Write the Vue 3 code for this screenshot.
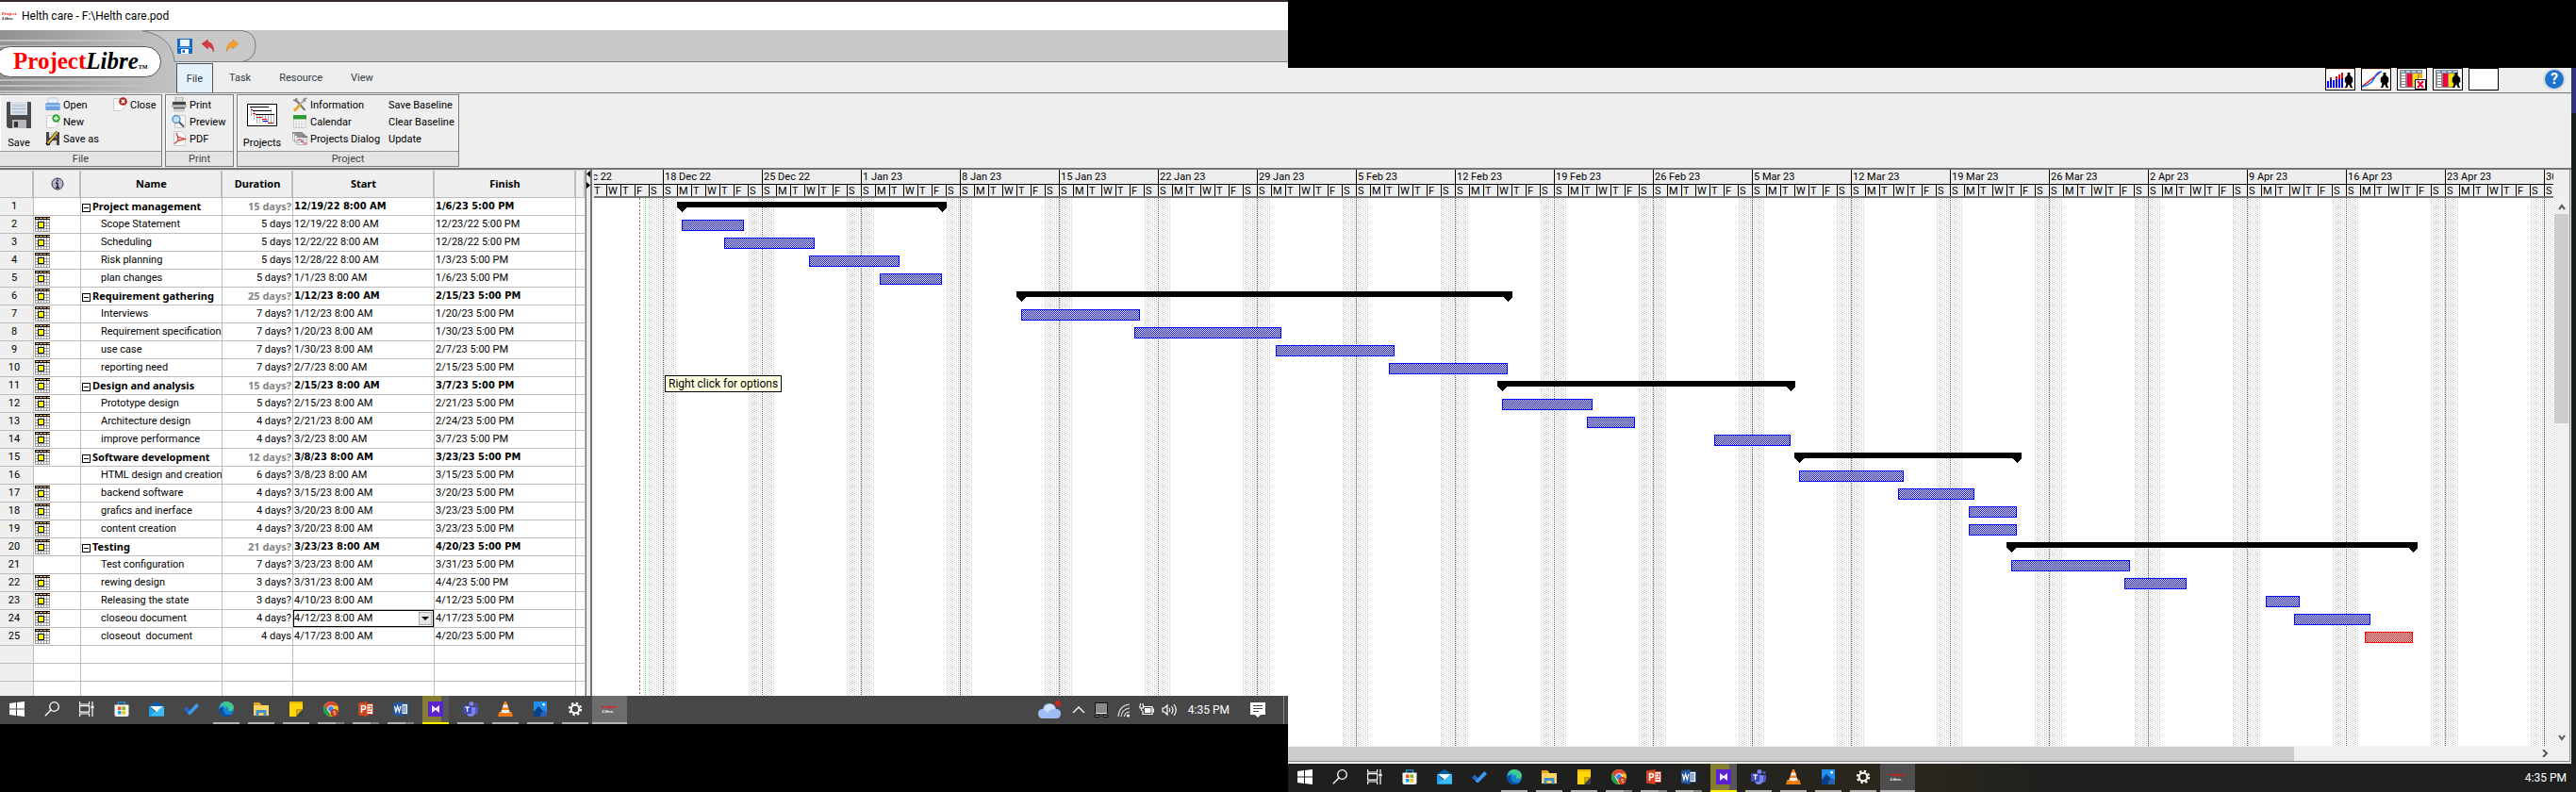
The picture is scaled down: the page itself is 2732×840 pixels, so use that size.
<script setup>
const DAY = 15
const ROW = 19
const ORIGIN = Date.UTC(2022, 11, 18)
const ORIGIN_X = 75

const tasks = [
  ['Project management', '15 days?', '12/19/22', '1/6/23', 'group', false],
  ['Scope Statement', '5 days', '12/19/22', '12/23/22', '', true],
  ['Scheduling', '5 days', '12/22/22', '12/28/22', '', true],
  ['Risk planning', '5 days', '12/28/22', '1/3/23', '', true],
  ['plan changes', '5 days?', '1/1/23', '1/6/23', '', true],
  ['Requirement gathering', '25 days?', '1/12/23', '2/15/23', 'group', true],
  ['Interviews', '7 days?', '1/12/23', '1/20/23', '', true],
  ['Requirement specification', '7 days?', '1/20/23', '1/30/23', '', true],
  ['use case', '7 days?', '1/30/23', '2/7/23', '', true],
  ['reporting need', '7 days?', '2/7/23', '2/15/23', '', true],
  ['Design and analysis', '15 days?', '2/15/23', '3/7/23', 'group', true],
  ['Prototype design', '5 days?', '2/15/23', '2/21/23', '', true],
  ['Architecture design', '4 days?', '2/21/23', '2/24/23', '', true],
  ['improve performance', '4 days?', '3/2/23', '3/7/23', '', true],
  ['Software development', '12 days?', '3/8/23', '3/23/23', 'group', true],
  ['HTML design and creation', '6 days?', '3/8/23', '3/15/23', '', false],
  ['backend software', '4 days?', '3/15/23', '3/20/23', '', true],
  ['grafics and inerface', '4 days?', '3/20/23', '3/23/23', '', true],
  ['content creation', '4 days?', '3/20/23', '3/23/23', '', true],
  ['Testing', '21 days?', '3/23/23', '4/20/23', 'group', true],
  ['Test configuration', '7 days?', '3/23/23', '3/31/23', '', false],
  ['rewing design', '3 days?', '3/31/23', '4/4/23', '', true],
  ['Releasing the state', '3 days?', '4/10/23', '4/12/23', '', true],
  ['closeou document', '4 days?', '4/12/23', '4/17/23', '', true],
  ['closeout  document', '4 days', '4/17/23', '4/20/23', 'critical', true],
].map(([name, duration, start, finish, kind, flag]) => ({ name, duration, start, finish, kind, flag }))

const editingRow = 23

function toDate(text) {
  const [m, d, y] = text.split('/').map(Number)
  let t = Date.UTC(2000 + y, m - 1, d)
  if (new Date(t).getUTCDay() === 0) t += 86400000
  return t
}
const dayX = (t) => ORIGIN_X + Math.round((t - ORIGIN) / 86400000) * DAY

const bars = tasks.map((t, i) => {
  const x = dayX(toDate(t.start)) + 5
  const end = dayX(toDate(t.finish)) + 11
  return { kind: t.kind, x, end, y: i * ROW }
})

const months = ['Jan', 'Feb', 'Mar', 'Apr', 'May', 'Jun', 'Jul', 'Aug', 'Sep', 'Oct', 'Nov', 'Dec']
const weeks = Array.from({ length: 21 }, (_, i) => {
  const t = ORIGIN + (i - 1) * 7 * 86400000
  const d = new Date(t)
  return {
    label: `${d.getUTCDate()} ${months[d.getUTCMonth()]} ${String(d.getUTCFullYear()).slice(2)}`,
    x: dayX(t),
  }
})
const dayLetters = ['S', 'M', 'T', 'W', 'T', 'F', 'S']

const apps = [
  { id: 'win', title: 'Start' },
  { id: 'search', title: 'Search' },
  { id: 'taskview', title: 'Task view' },
  { id: 'store', title: 'Store' },
  { id: 'mail', title: 'Mail' },
  { id: 'todo', title: 'To Do' },
  { id: 'edge', title: 'Edge', open: 'one' },
  { id: 'folder', title: 'File Explorer', open: 'one' },
  { id: 'notes', title: 'Sticky Notes', open: 'one' },
  { id: 'chrome', title: 'Chrome', open: 'two' },
  { id: 'ppt', title: 'PowerPoint', open: 'two' },
  { id: 'word', title: 'Word', open: 'two' },
  { id: 'vs', title: 'Media', open: 'alert' },
  { id: 'teams', title: 'Teams', open: 'one' },
  { id: 'vlc', title: 'VLC', open: 'one' },
  { id: 'photos', title: 'Photos', open: 'one' },
  { id: 'gear', title: 'Settings', open: 'one' },
]
const fileItems = [
  { id: 'open', label: 'Open' },
  { id: 'close', label: 'Close' },
  { id: 'new', label: 'New' },
  { id: 'saveas', label: 'Save as' },
]
const printItems = [
  { id: 'print', label: 'Print' },
  { id: 'preview', label: 'Preview' },
  { id: 'pdf', label: 'PDF' },
]
const projectItems = [
  { id: 'tools', label: 'Information' },
  { id: 'calendar', label: 'Calendar' },
  { id: 'projects', label: 'Projects Dialog' },
]
const baselineItems = ['Save Baseline', 'Clear Baseline', 'Update']
const views = ['histogram', 'curve', 'nosheet', 'sheet', 'blank']
</script>

<template>
  <div class="desktop">
    <svg class="sprite" aria-hidden="true">
      <symbol id="i-win" viewBox="0 0 16 16"><path fill="#fff" d="M0 2l7-1v6.500H0zM8 .9L16 0v7.500H8zM0 8.500h7V15l-7-1zM8 8.500h8V16l-8-1z" /></symbol>
      <symbol id="i-search" viewBox="0 0 16 16"><g fill="none" stroke="#fff" stroke-width="1.300"><circle cx="10.500" cy="5.500" r="4.800" /><path d="M7 9L.8 15.300" /></g></symbol>
      <symbol id="i-taskview" viewBox="0 0 16 16"><g fill="none" stroke="#fff" stroke-width="1.200"><path d="M.6 0v3h10V0M.6 16v-3h10v3M.6 4.600h10v6.500H.6zM14 0v4M14 8v8" /></g><path fill="#fff" d="M12.500 4.500h3v3h-3z" /></symbol>
      <symbol id="i-store" viewBox="0 0 16 16"><path fill="none" stroke="#1b9de2" stroke-width="1.300" d="M4.500 4V.8h7V4" /><path fill="#f5f5f5" d="M.5 3.500h15V14q0 2-2 2h-11q-2 0-2-2z" /><path fill="#f25022" d="M4 5.500h3.500V9H4z" /><path fill="#7fba00" d="M8.500 5.500H12V9H8.500z" /><path fill="#00a4ef" d="M4 10h3.500v3.500H4z" /><path fill="#ffb900" d="M8.500 10H12v3.500H8.500z" /></symbol>
      <symbol id="i-mail" viewBox="0 0 16 16"><path fill="#0a5ea8" d="M0 5l8-5 8 5v3H0z" /><path fill="#1ca0ea" d="M0 5l8 7 8-7v10.500H0z" /><path fill="#3bbcf5" d="M0 15.500L16 5v10.500z" /><path fill="#eef6fb" d="M1 5h14l-7 6z" /></symbol>
      <symbol id="i-todo" viewBox="0 0 16 16"><path fill="#2564cf" d="M0 8.500L2.800 5.600l5.500 5.500-2.900 2.900z" /><path fill="#3f9bea" d="M5.400 14L3.900 12.300 13.200 2 16 4.800 6.900 14z" /></symbol>
      <symbol id="i-edge" viewBox="0 0 16 16"><circle cx="8" cy="8" r="8" fill="#1482d0" /><path fill="#43c98b" d="M1 5Q4-1 10 .3q6 1.500 6 7-1 3.500-6 3Q11 8 9 6 5 3 1 5z" /><path fill="#0c4fa0" d="M0 8q2-5 7-3-4 2-2 6 2.500 4.500 8.500 2.800Q9 18 4 15 0 12 0 8z" /><path fill="#2fb0e4" d="M0 8Q1 3 6 4.500 9 6 8 8.500 7 5 3 6 .5 7 0 8z" /></symbol>
      <symbol id="i-folder" viewBox="0 0 16 16"><path fill="#e8a317" d="M0 1h6l2 2v4H0z" /><path fill="#ffd45e" d="M0 4h16v11H0z" /><path fill="#3a93dc" d="M2.500 9h11v6.500h-3V12h-5v3.500h-3z" /></symbol>
      <symbol id="i-notes" viewBox="0 0 16 16"><path fill="#ffd60a" d="M1 0h14v16H1z" /><path fill="#e5b400" d="M1 0h14v2H1z" /><path fill="#3f3f3f" d="M8.500 8.500H15V16H8.500z" /><path fill="#d9a800" d="M8.500 8.500H15L8.500 15z" /></symbol>
      <symbol id="i-chrome" viewBox="0 0 16 16"><circle cx="8" cy="8" r="8" fill="#f5c518" /><path fill="#db4437" d="M1 4Q4 0 8 0q5 0 7.400 4.500H8L5 9z" /><path fill="#1e9e55" d="M1 4l4.500 7L8 16Q0 15.500 0 8 0 6 1 4z" /><circle cx="8" cy="8" r="3.700" fill="#fff" /><circle cx="8" cy="8" r="2.900" fill="#4285f4" /><circle cx="11.500" cy="12" r="4" fill="#c23b22" /><path fill="none" stroke="#e9b3a0" d="M12.700 10.500h-2V12h2v1.800h-2" /></symbol>
      <symbol id="i-ppt" viewBox="0 0 16 16"><path fill="#fff" stroke="#d04423" d="M8 2.500h7.500v11H8z" /><path fill="none" stroke="#d04423" stroke-width="1.200" d="M10 5h3.500v3H10M10 10.500h4" /><path fill="#d04423" d="M0 1.500L9.500 0v16L0 14.500z" /><path fill="none" stroke="#fff" stroke-width="1.500" d="M3.500 12V4.500h2q2 0 2 2t-2 2h-2" /></symbol>
      <symbol id="i-word" viewBox="0 0 16 16"><path fill="#fff" stroke="#2b5aa6" d="M8 2.500h7.500v11H8z" /><path stroke="#2b5aa6" d="M10 5h4M10 7h4M10 9h4M10 11h4" /><path fill="#2456a4" d="M0 1.500L9.500 0v16L0 14.500z" /><path fill="none" stroke="#fff" stroke-width="1.200" d="M1.500 5l1.400 6L4.700 5l1.600 6L8 5" /></symbol>
      <symbol id="i-vs" viewBox="0 0 16 16"><path fill="#5c22d0" d="M0 0h16v16H0z" /><path fill="#f3e8ff" d="M4 4l4 3 4-3v8L8 9l-4 3z" /></symbol>
      <symbol id="i-teams" viewBox="0 0 16 16"><circle cx="9" cy="2.500" r="2.500" fill="#7b83eb" /><circle cx="14" cy="3.500" r="1.600" fill="#5059c9" /><path fill="#5059c9" d="M11 6h5v5q0 3-4 3z" /><path fill="#7b83eb" d="M5 6h8v6q-1 4-5 4t-4-5z" /><path fill="#4048b8" d="M0 4h9v9H0z" /><path stroke="#fff" stroke-width="1.300" fill="none" d="M2.300 6.200h4.600M4.600 6v5" /></symbol>
      <symbol id="i-vlc" viewBox="0 0 16 16"><path fill="#f07b13" d="M1.500 11h13l1.500 5H0z" /><path fill="#f58220" d="M7 0h2l4 12q-5 2.500-10 0z" /><path fill="#eee" d="M5.900 3.500h4.200L11 6.500H5zM4.200 9h7.600l.8 2.500q-4.600 1.500-9.200 0z" /></symbol>
      <symbol id="i-photos" viewBox="0 0 16 16"><path fill="#1f8ff0" d="M1 0h14v16H1z" /><path fill="#0c3f86" d="M1 11l5-6 9 9v2H1z" /><path fill="#2a62b0" d="M8 13l4-4 3 3v4H8z" /><path fill="#fff" d="M10 2.500h3V4h-3zM11 1.700h1.200v3H11z" /></symbol>
      <symbol id="i-gear" viewBox="0 0 16 16"><circle cx="8" cy="8" r="4.300" fill="none" stroke="#fff" stroke-width="2" /><circle cx="8" cy="8" r="6.200" fill="none" stroke="#fff" stroke-width="2" stroke-dasharray="2.400 2.470" /></symbol>
      <symbol id="i-open" viewBox="0 0 16 16"><path fill="#e8f0fa" stroke="#9ab" stroke-width=".5" d="M3 1h10v8H3z" /><path fill="#6fa3df" d="M0 7l2-1h12l2 1-.6 7H.6z" /><path fill="#9cc3f0" d="M0 8h16l-.3 2H.3z" /></symbol>
      <symbol id="i-new" viewBox="0 0 16 16"><path fill="#fafafa" stroke="#ccc" d="M1.500 1.500h12v9l-4 4h-8z" /><circle cx="11.500" cy="4.500" r="4.200" fill="#2eab2e" /><path stroke="#fff" stroke-width="1.500" d="M11.500 2v5M9 4.500h5" /></symbol>
      <symbol id="i-close" viewBox="0 0 16 16"><path fill="#fafafa" stroke="#ccc" d="M1.500 1.500h12v9l-4 4h-8z" /><circle cx="11.500" cy="4.500" r="4.300" fill="#b0281c" /><path stroke="#fff" stroke-width="1.500" d="M9.800 2.800l3.400 3.400M13.200 2.800L9.800 6.200" /></symbol>
      <symbol id="i-saveas" viewBox="0 0 16 16"><path fill="#444" d="M1 1h14v14H1z" /><path fill="#ddd" d="M4 1h8v6H4zM5 10h7v5H5z" /><path stroke="#222" stroke-width="3.500" d="M1.500 14.500L13 1" /><path stroke="#e6b33a" stroke-width="2" d="M2.500 13L13 1" /></symbol>
      <symbol id="i-print" viewBox="0 0 16 16"><path fill="#ddd" stroke="#888" stroke-width=".6" d="M4 0h8v5H4z" /><path fill="#444" d="M1 5h14v3H1z" /><path fill="#b5b5b5" d="M0 8h16v3H0z" /><path fill="#555" d="M2 11h12v1.500H2z" /><path fill="#ddd" stroke="#999" stroke-width=".6" d="M3 12.500h10V15H3z" /></symbol>
      <symbol id="i-preview" viewBox="0 0 16 16"><path fill="#f4f4f4" stroke="#ccc" d="M3.500 1.500h11v13h-11z" /><circle cx="5" cy="5.500" r="4" fill="#bfe0f7" stroke="#5c93c4" stroke-width="1.400" /><path stroke="#555" stroke-width="2" d="M8 8.500l5 5" /></symbol>
      <symbol id="i-pdf" viewBox="0 0 16 16"><path fill="#f6f6f6" stroke="#ccc" d="M2.500 .5h8l4 4v11h-12z" /><path fill="none" stroke="#d83a3a" stroke-width="1.300" d="M5 2l1.500 4L14 8.500 7 10l-4 3.500M6.500 6L7 10" /></symbol>
      <symbol id="i-tools" viewBox="0 0 16 16"><path stroke="#777" stroke-width="2" d="M3 2l10.500 12" /><path stroke="#aaa" stroke-width="2" d="M13.500 2L8 8" /><path stroke="#e0a81e" stroke-width="3" d="M8.500 8L2 14.500" /><path stroke="#888" stroke-width="1.500" fill="none" d="M1 3l3 1.500L5 1M15.500 1L12 2.500l2 2.500" /></symbol>
      <symbol id="i-calendar" viewBox="0 0 16 16"><path fill="#f8f8f8" stroke="#ccc" d="M1.500 3h13v11.500h-13z" /><path fill="#2c9c32" d="M1 1h14v4.500H1z" /><path stroke="#bbb" stroke-dasharray="2 1" d="M3 8h10M3 10.500h10M3 13h10" /></symbol>
      <symbol id="i-projects" viewBox="0 0 16 16"><path fill="#fff" stroke="#999" stroke-width=".7" d="M.5 2h11v8H.5zM2.500 4h11v8h-11zM5 6h10.500v8.500H5z" /><path stroke="#444" d="M0 2h11M2.500 4h11M5 6h11" /><path stroke="#ccc" stroke-width=".7" d="M8 7v7M11 7v7M13.500 7v7" /><path stroke="#e33" d="M6 9h4M11.500 13h4" /><path stroke="#33c" d="M9 11h3" /></symbol>
      <symbol id="i-gantts" viewBox="0 0 32 24"><path fill="#fff" stroke="#000" d="M.5 .5h31v23H.5z" /><path fill="none" stroke="#bbb" d="M4.500 4v9M7.500 8v9M10.500 12v9M13.500 12v9M16.500 12v9M19.500 12v9M22.500 12v9M25.500 12v9M28.500 12v9M25.500 5v6" /><path stroke="#000" d="M3 3.500h20M6 7.500h20M9 11.500h20" /><path stroke="#e00" d="M10 14.500h6M16 16.500h5M22 20.500h6M6 10.500h3M4 6.500h2" /><path stroke="#00d" d="M17 18.500h5" /></symbol>
      <symbol id="i-floppy" viewBox="0 0 28 30"><path fill="#4a4a4c" d="M1 2q0-1 1-1h24q1 0 1 1v27H3l-2-2z" /><path fill="#d6e0ea" d="M5 1h18v14H5z" /><path stroke="#a5b4c4" d="M7 5h14M7 8.500h14M7 12h14" /><path fill="#b5b7ba" d="M7 20h15v9H7z" /><path fill="#333" d="M9 22h4v6H9z" /></symbol>
      <symbol id="i-savesmall" viewBox="0 0 16 16"><path fill="#1769c8" d="M0 0h16v16H0z" /><path fill="#e9f4ff" d="M3 1h10v7H3z" /><path fill="#5fb2f3" d="M1 9h14v1H1z" /><path fill="#fff" d="M4 11h8v5H4z" /><path fill="#1769c8" d="M5.500 12H8v3H5.500z" /></symbol>
      <symbol id="i-undo" viewBox="0 0 16 16"><path fill="#d93a3f" stroke="#b4232a" stroke-width=".5" d="M1 5.500L7.500 1v2.600q6.500.6 6 10.400-1.500-5-6-5.400V11z" /></symbol>
      <symbol id="i-redo" viewBox="0 0 16 16"><path fill="#f4a02a" stroke="#cf7d12" stroke-width=".5" d="M15 5.500L8.500 1v2.600Q2 4.200 2.500 14q1.500-5 6-5.400V11z" /></symbol>
      <symbol id="i-constraint" viewBox="0 0 16 16"><path fill="#fff" d="M0 3h16v13H0z" /><path fill="none" stroke="#9a9a9a" d="M.5 3v13M3.500 3v13M6.500 3v13M9.500 3v13M12.500 3v13M15.500 3v13M0 6.500h16M0 9.500h16M0 12.500h16M0 15.500h16" /><path stroke="#000" d="M0 .5h16M0 2.500h16" /><path stroke="#000" d="M0 1.500h16" /><path stroke="#ffc064" stroke-dasharray="3 1" d="M1 1.500h15" /><path fill="#ff0" stroke="#000" d="M3.500 5.500h6v6h-6z" /></symbol>
      <symbol id="i-person" viewBox="0 0 10 18"><path d="M3.500 0h3v3L9.500 6v5H8v3l1.500 3H7L5 13l-2 4H.5L2 14v-3H.5V6l3-3z" /></symbol>
    </svg>

    <section class="window">
      <div class="wallpaper"></div>
      <header class="titlebar">
        <span class="mini"><b>Project</b><i>Libre.</i></span>
        <h1>Helth care - F:\Helth care.pod</h1>
      </header>

      <div class="ribbon-top">
        <div class="brand">
          <svg class="brandbg" viewBox="0 0 275 67" aria-hidden="true">
            <defs>
              <linearGradient id="shade" x1="0" x2="1" y1="0" y2="0"><stop offset="0" stop-color="#929292" /><stop offset="1" stop-color="#c4c4c4" /></linearGradient>
            </defs>
            <path fill="url(#shade)" d="M0 0h151q32 6 33 33h3v34H0z" />
            <path stroke="#bfbfbf" stroke-width="2" d="M0 11h170M0 17h177M0 53h186M0 59h186M0 65h186" />
            <path fill="none" stroke="#7e7e7e" d="M151 .5q32 6 34 33h72q14-3 14-17t-14-16H151" />
          </svg>
          <div class="logo"><b>Project</b><i>Libre</i><small>TM</small></div>
          <div class="quick">
            <button aria-label="Save"><svg><use href="#i-savesmall" /></svg></button>
            <button aria-label="Undo"><svg><use href="#i-undo" /></svg></button>
            <button aria-label="Redo"><svg><use href="#i-redo" /></svg></button>
          </div>
        </div>
        <nav class="tabs">
          <button class="active">File</button>
          <button>Task</button>
          <button>Resource</button>
          <button>View</button>
        </nav>
        <div class="views">
          <button v-for="v in views" :key="v" :aria-label="v">
            <svg v-if="v !== 'blank'" viewBox="1 1 30 22">
              <path v-if="v === 'histogram' || v === 'curve'" fill="#ffd9b8" d="M1 1h30v1H1zM1 21h30v1H1z" />
              <template v-if="v === 'histogram'">
                <path stroke="#00f" stroke-width="2" d="M3 21v-7M6 21V10M9 21v-8M12 21v-9M15 21v-10M18 21V11" />
                <path stroke="#f00" stroke-width="2" d="M6 12v-2M12 12V9M15 12V7M18 11V5" />
              </template>
              <template v-if="v === 'curve'">
                <path fill="none" stroke="#e00" stroke-width="1.500" d="M1 20L20 5" /><path fill="none" stroke="#06f" stroke-width="1.500" d="M1 20q10-2 13-9t8-7" />
              </template>
              <template v-if="v === 'sheet' || v === 'nosheet'">
                <path fill="#888" d="M3 2h24v19H3z" /><path fill="#fff" d="M5 6h4v14H5z" /><path fill="#f5003d" d="M11 6h5v14h-5z" /><path fill="#fd0" d="M17 6h5v14h-5z" /><path fill="#fa0" d="M23 6h4v5h-4z" /><path fill="#fff" d="M23 11h4v10h-4z" />
                <path stroke="#888" d="M4 8.500h6M4 11.500h6M4 14.500h6M4 17.500h6" /><path stroke="#a9c8ee" stroke-dasharray="4 2" stroke-width="2" d="M4 4h23" />
              </template>
              <template v-if="v === 'nosheet'"><path fill="#fff" stroke="#000" d="M19.500 12.500h11v10h-11z" /><path stroke="#e03" stroke-width="2" d="M22 14l6 7M28 14l-6 7" /></template>
              <use v-if="v !== 'nosheet'" href="#i-person" x="20" y="5" width="10" height="17" />
            </svg>
          </button>
          <button class="help" aria-label="Help">?</button>
        </div>
      </div>

      <div class="ribbon">
        <section class="group">
          <div class="tools">
            <button class="big"><svg><use href="#i-floppy" /></svg>Save</button>
            <div class="filegrid">
              <button v-for="f in fileItems" :key="f.id"><svg><use :href="'#i-' + f.id" /></svg>{{ f.label }}</button>
            </div>
          </div>
          <h2>File</h2>
        </section>
        <section class="group print">
          <div class="tools">
            <div class="stack">
              <button v-for="f in printItems" :key="f.id"><svg><use :href="'#i-' + f.id" /></svg>{{ f.label }}</button>
            </div>
          </div>
          <h2>Print</h2>
        </section>
        <section class="group project">
          <div class="tools">
            <button class="big wide"><svg><use href="#i-gantts" /></svg>Projects</button>
            <div class="stack list">
              <button v-for="f in projectItems" :key="f.id"><svg><use :href="'#i-' + f.id" /></svg>{{ f.label }}</button>
            </div>
            <div class="stack">
              <button v-for="b in baselineItems" :key="b">{{ b }}</button>
            </div>
          </div>
          <h2>Project</h2>
        </section>
      </div>

      <main class="work">
        <div class="sheet">
          <table>
            <colgroup><col class="c0" /><col class="c1" /><col class="c2" /><col class="c3" /><col class="c4" /><col class="c4" /><col class="c6" /></colgroup>
            <thead>
              <tr>
                <th></th>
                <th><svg class="info" viewBox="0 0 14 14"><circle cx="7" cy="7" r="6" fill="#b4b4cc" stroke="#333" /><path stroke="#223" stroke-width="1.500" d="M7 6v5M5 6h2M5 11h4M7 2.500v2" /></svg></th>
                <th>Name</th><th>Duration</th><th>Start</th><th>Finish</th><th></th>
              </tr>
            </thead>
            <tbody>
              <tr v-for="(t, i) in tasks" :key="i" :class="{ summary: t.kind === 'group' }">
                <th>{{ i + 1 }}</th>
                <td class="flag"><svg v-if="t.flag"><use href="#i-constraint" /></svg></td>
                <td class="name"><button v-if="t.kind === 'group'" class="fold" aria-label="Collapse"></button>{{ t.name }}</td>
                <td class="dur">{{ t.duration }}</td>
                <td v-if="i !== editingRow" class="date">{{ t.start }} 8:00 AM</td>
                <td v-else class="edit">
                  <div><input aria-label="Start" :value="t.start + ' 8:00 AM'" /><button aria-label="Choose date"></button></div>
                </td>
                <td class="date">{{ t.finish }} 5:00 PM</td>
                <td></td>
              </tr>
              <tr v-for="n in 4" :key="'e' + n"><th></th><td></td><td></td><td></td><td></td><td></td><td></td></tr>
            </tbody>
          </table>
        </div>
        <div class="splitter">
          <svg viewBox="0 0 4 20"><path d="M4 0v7L0 3.500zM0 12v7l4-3.500z" /></svg>
        </div>
        <div class="chart">
          <div class="scale">
            <div v-for="w in weeks" :key="w.x" class="week">
              <div class="label">{{ w.label }}</div>
              <div class="days"><span v-for="(d, i) in dayLetters" :key="i">{{ d }}</span></div>
            </div>
          </div>
          <div class="canvas">
            <svg class="gantt" shape-rendering="crispEdges">
              <defs>
                <pattern id="weekend" width="4" height="2" patternUnits="userSpaceOnUse"><path fill="#c9c9c9" d="M0 0h1v1H0zM2 1h1v1H2z" /></pattern>
                <pattern id="work" width="2" height="2" patternUnits="userSpaceOnUse"><path fill="#fff" d="M0 0h2v2H0z" /><path fill="#00f" d="M0 0h1v1H0zM1 1h1v1H1z" /></pattern>
                <pattern id="critical" width="2" height="2" patternUnits="userSpaceOnUse"><path fill="#fff" d="M0 0h2v2H0z" /><path fill="#f00" d="M0 0h1v1H0zM1 1h1v1H1z" /></pattern>
                <pattern id="dotline" width="2" height="2" patternUnits="userSpaceOnUse"><path fill="#666" d="M0 0h2v1H0z" /></pattern>
                <pattern id="greenline" width="2" height="2" patternUnits="userSpaceOnUse"><path fill="#0f0" d="M0 0h2v1H0z" /></pattern>
                <pattern id="dashline" width="2" height="4" patternUnits="userSpaceOnUse"><path fill="#777" d="M0 0h2v2H0z" /></pattern>
              </defs>
              <g v-for="w in weeks" :key="w.x">
                <rect :x="w.x - DAY" y="0" :width="2 * DAY - 1" height="100%" fill="url(#weekend)" />
                <rect :x="w.x" y="0" width="1" height="100%" fill="url(#dotline)" />
              </g>
              <rect x="50" y="0" width="1" height="100%" fill="url(#dashline)" />
              <rect x="56" y="0" width="1" height="100%" fill="url(#greenline)" />
              <template v-for="b in bars" :key="b.y">
                <path v-if="b.kind === 'group'" :d="`M${b.x - 5} ${b.y + 4}H${b.end + 5}v6l-5 5-5-5H${b.x + 5}l-5 5-5-5z`" />
                <rect v-else :x="b.x + 0.5" :y="b.y + 4.5" :width="b.end - b.x - 1" height="11" :stroke="b.kind ? '#f00' : '#00f'" :fill="b.kind ? 'url(#critical)' : 'url(#work)'" />
              </template>
            </svg>
            <div class="tooltip" role="tooltip">Right click for options</div>
          </div>
          <div class="vscroll"><svg viewBox="0 0 8 8"><path d="M1 7l3-4 3 4" /></svg><i></i><svg viewBox="0 0 8 8"><path d="M1 1l3 4 3-4" /></svg></div>
          <div class="hscroll"><i></i><svg viewBox="0 0 8 8"><path d="M2 0l4 4-4 4" /></svg></div>
        </div>
      </main>
    </section>

    <footer class="taskbar right">
      <button v-for="a in apps" :key="a.id" :class="['app', a.open]" :aria-label="a.title"><svg><use :href="'#i-' + a.id" /></svg></button>
      <button class="app current" aria-label="ProjectLibre"><span class="mini"><b>Project</b><i>Libre.</i></span></button>
      <time>4:35 PM</time>
    </footer>

    <div class="above-right"></div>
    <div class="screen-left">
      <footer class="taskbar">
        <button v-for="a in apps" :key="a.id" :class="['app', a.open]" :aria-label="a.title"><svg><use :href="'#i-' + a.id" /></svg></button>
        <button class="app current" aria-label="ProjectLibre"><span class="mini"><b>Project</b><i>Libre.</i></span></button>
        <div class="tray">
          <svg class="weather" viewBox="0 0 24 20"><path fill="#9fbdf2" d="M5 19q-5 0-5-5t5-5q1-6 7-6t7 6q5 0 5 5t-5 5z" /><path fill="#cfe0fb" d="M6 10q1-6 6-6t6 5q-6 0-8 4-2-3-4-3z" /><circle cx="21" cy="3" r="3" fill="#c8281e" /></svg>
          <svg viewBox="0 0 16 16"><path fill="none" stroke="#fff" stroke-width="1.300" d="M2 11l6-6 6 6" /></svg>
          <svg viewBox="0 0 16 16"><path fill="#8a8a8a" stroke="#111" d="M1.500 .5h13v11h-13z" /><path stroke="#ddd" d="M2 11.500h12" /><path fill="#888" stroke="#111" d="M1 13.500h5v2H1zM10 13.500h5v2h-5z" /></svg>
          <svg viewBox="0 0 16 16"><path fill="none" stroke="#ddd" stroke-width="1.200" d="M2 15Q3 3 14 2M5 15q1-8 9-9M8.500 15q.5-4.500 5.500-5" /><circle cx="12.500" cy="14" r="1.500" fill="#fff" /></svg>
          <svg viewBox="0 0 16 16"><path fill="none" stroke="#fff" stroke-width="1.200" d="M5 4.500h9v8H4V9M14 7h1.500v3H14M1 3v3h3.500V3M2.700 6v3M1.500 1v2M4 1v2" /><path fill="#fff" d="M6 6h6.500v5H6z" /></svg>
          <svg viewBox="0 0 16 16"><path fill="none" stroke="#fff" stroke-width="1.200" d="M1 6v4h2l3 3V3L3 6zM8 6q1.500 2 0 4M10.500 4q3 4 0 8M13 2q4.500 6 0 12" /></svg>
          <time>4:35 PM</time>
          <svg class="notice" viewBox="0 0 16 16"><path fill="#fff" d="M0 0h16v13h-5l-3 3-3-3H0z" /><path stroke="#444" d="M3 3.500h10M3 6.500h10M3 9.500h6" /></svg>
        </div>
      </footer>
    </div>
  </div>
</template>

<style>
html, body { background: #000; }
body { overflow: hidden; }
</style>

<style scoped>
* { box-sizing: border-box; }
.desktop {
  position: relative;
  display: flex;
  flex-direction: column;
  height: 100vh;
  overflow: hidden;
  background: linear-gradient(#2f3577 120px, #161d1f 120px);
  font-family: Roboto, "Noto Sans", sans-serif;
  font-size: 11px;
  color: #000;
}
.sprite { position: absolute; width: 0; height: 0; }
button {
  padding: 0;
  border: 0;
  background: none;
  font: inherit;
  color: inherit;
}
h1, h2 { margin: 0; font-weight: normal; }

.window {
  flex: 1;
  min-height: 0;
  display: flex;
  flex-direction: column;
  margin-right: 5px;
  background: #eee;
}
.wallpaper { height: 2px; background: #33292d; }
.titlebar {
  display: flex;
  align-items: center;
  height: 30px;
  padding-left: 2px;
  background: #fff;
}
.titlebar h1 { margin-left: 5px; font-size: 12px; }
.mini {
  display: flex;
  flex-direction: column;
  width: 16px;
  font: bold 5px/5px "Liberation Serif", serif;
  text-align: left;
}
.mini b { color: #f00; }

.ribbon-top {
  display: flex;
  align-items: flex-end;
  height: 67px;
  background: linear-gradient(#c8c8c8 33px, #7e7e7e 33px, #7e7e7e 34px, #eee 34px);
  border-bottom: 1px solid #777;
}
.brand { position: relative; width: 187px; height: 66px; }
.brandbg { position: absolute; left: 0; top: 0; width: 275px; height: 67px; }
.logo {
  position: absolute;
  left: -6px;
  top: 17px;
  width: 177px;
  height: 33px;
  padding-left: 19px;
  border: 1px solid #555;
  border-radius: 17px;
  background: #fff;
  font: bold 25px/29px "Liberation Serif", serif;
  white-space: nowrap;
}
.logo b { color: #f00; }
.logo small { font-size: 6px; }
.quick { position: absolute; left: 188px; top: 9px; display: flex; gap: 9px; }
.quick svg { display: block; width: 16px; height: 16px; }
.tabs { display: flex; height: 31px; color: #333b45; }
.tabs button { padding: 0 15px; }
.tabs .active {
  width: 39px;
  margin-right: 2px;
  padding: 0;
  border: 1px solid #4d5560;
  border-bottom: 0;
  background: #e5f1fb;
}
.views { display: flex; gap: 6px; margin-left: auto; padding-right: 6px; height: 26px; }
.views button { width: 32px; height: 24px; border: 1px solid #000; background: #fff; }
.views svg { display: block; width: 30px; height: 22px; }
.views .help {
  width: 24px;
  margin-left: 41px;
  border: 2px solid #ddd;
  border-radius: 12px;
  background: #1d74cf;
  color: #fff;
  font-weight: bold;
  font-size: 16px;
  line-height: 20px;
}

.ribbon {
  display: flex;
  align-items: flex-start;
  gap: 3px;
  height: 81px;
  padding-top: 1px;
  border-bottom: 2px solid #747474;
}
.group {
  height: 77px;
  border: 1px solid #7a7a7a;
  box-shadow: inset 1px 1px #fff;
}
.group:first-child { width: 172px; border-left: 0; }
.print { width: 73px; }
.project { width: 236px; }
.tools { display: flex; height: 59px; padding-top: 1px; }
.group h2 {
  height: 16px;
  border-top: 1px solid #999;
  background: #e4e4e4;
  color: #444;
  text-align: center;
  font-size: 11px;
  line-height: 15px;
}
.big {
  display: flex;
  flex-direction: column;
  align-items: center;
  justify-content: space-between;
  width: 40px;
  padding: 5px 0 2px;
}
.big svg { width: 28px; height: 30px; }
.wide { width: 52px; }
.wide svg { width: 32px; height: 24px; margin-top: 3px; }
.filegrid { display: grid; grid-template-columns: 71px 50px; grid-template-rows: repeat(3, 18px); margin-left: 8px; }
.filegrid button:last-child { grid-column: 1; grid-row: 3; }
.stack { display: grid; grid-template-rows: repeat(3, 18px); margin-left: 6px; align-content: start; }
.list { width: 102px; }
.list + .stack { margin-left: 0; }
.filegrid button, .stack button { display: flex; align-items: center; gap: 3px; white-space: nowrap; }
.filegrid svg, .stack svg { width: 16px; height: 16px; flex: none; }

.work { flex: 1; min-height: 0; display: flex; border-right: 1px solid #888; border-bottom: 1px solid #888; margin: 0 1px 2px 0; }
.sheet { width: 621px; overflow: hidden; border-top: 1px solid #d8d8d8; background: #fff; }
table { width: 621px; table-layout: fixed; border-collapse: separate; border-spacing: 0; }
.c0 { width: 36px; }
.c1 { width: 50px; }
.c2 { width: 150px; }
.c3 { width: 75px; }
.c4 { width: 150px; }
.c6 { width: 10px; }
th, td {
  height: 19px;
  padding: 0 0 0 1px;
  border: solid #bcbcbc;
  border-width: 0 1px 1px 0;
  line-height: 18px;
  white-space: pre;
  text-align: left;
  overflow: hidden;
}
thead th { height: 29px; border-right-width: 2px; background: #efefef; text-align: center; font-family: "Noto Sans", sans-serif; }
tbody th { background: #efefef; font-weight: normal; text-align: center; padding-right: 6px; }
.summary td { font-family: "Noto Sans", sans-serif; font-weight: bold; }
.summary td.date { font-family: "DejaVu Sans Condensed", "DejaVu Sans", sans-serif; }
.info { display: block; width: 14px; height: 14px; margin: 0 auto; }
.flag svg { display: block; width: 16px; height: 16px; }
td.name { padding-left: 21px; }
.summary td.name { padding-left: 1px; }
td.dur { padding-right: 1px; text-align: right; }
.summary td.dur { color: #858585; }
.fold {
  display: inline-block;
  width: 9px;
  height: 9px;
  margin-right: 2px;
  border: 1px solid #000;
  background: linear-gradient(#000, #000) center / 5px 1px no-repeat #fff;
  vertical-align: -1px;
}
td.edit { padding: 0; white-space: normal; }
.edit div { display: flex; align-items: center; height: 18px; border: 1px solid #000; background: #fff; }
.edit input { flex: 1; min-width: 0; height: 16px; padding: 0; border: 0; outline: 0; font: inherit; background: transparent; }
.edit button {
  width: 14px;
  height: 14px;
  margin-right: 1px;
  border: 1px solid #aaa;
  background: #e6e6e6;
  display: grid;
  place-items: center;
}
.edit button::after { content: ""; border: solid transparent; border-width: 4px 4px 0; border-top-color: #000; }

.splitter { width: 7px; border: solid #747474; border-width: 0 2px 0 1px; }
.splitter svg { display: block; width: 4px; height: 20px; margin-top: 1px; }

.chart {
  flex: 1;
  min-width: 0;
  display: grid;
  grid-template: 30px minmax(0, 1fr) 16px / minmax(0, 1fr) 17px;
}
.scale {
  display: flex;
  margin-left: 2px;
  overflow: hidden;
  border-bottom: 2px solid #747474;
}
.week { flex: 0 0 105px; }
.week:first-child { margin-left: -32px; }
.label {
  height: 15px;
  padding-left: 1px;
  border-left: 1px solid #000;
  line-height: 15px;
}
.days { display: flex; border-top: 1px solid #000; height: 13px; }
.days span { width: 15px; padding-left: 1px; border-left: 1px solid #000; line-height: 13px; height: 12px; }
.canvas { position: relative; overflow: hidden; background: #fff; grid-row: 2; }
.gantt { display: block; width: 100%; height: 100%; }
.tooltip {
  position: absolute;
  left: 77px;
  top: 188px;
  height: 18px;
  padding: 0 3px;
  border: 1px solid #000;
  background: #ffffe1;
  font-size: 12px;
  line-height: 17px;
}
.vscroll { grid-column: 2; grid-row: 2; display: flex; flex-direction: column; align-items: center; padding: 5px 0 4px; background: #f0f0f0; }
.vscroll i { width: 15px; height: 222px; margin: 4px 0 auto; background: #cdcdcd; }
.vscroll svg, .hscroll svg { width: 8px; height: 8px; fill: none; stroke: #555; stroke-width: 2; }
.hscroll { grid-column: 1 / 3; display: flex; justify-content: space-between; align-items: center; padding-right: 22px; background: #f0f0f0; }
.hscroll i { width: 87%; height: 15px; background: #cdcdcd; }

.taskbar {
  position: relative;
  display: flex;
  align-items: stretch;
  height: 30px;
  background: #474747;
  color: #fff;
}
.taskbar time { font-size: 12px; align-self: center; }
.right { flex: none; margin-left: 50%; background: linear-gradient(90deg, #1f1f1f 25%, #2b271c 48%, #1f1f1f 60%); }
.right time { margin: 0 10px 0 auto; }
.app { width: 37px; border-bottom: 2px solid transparent; display: flex; align-items: center; justify-content: center; }
.app:first-child { width: 36px; }
.app svg { width: 16px; height: 16px; }
.app.one, .app.two, .app.alert { background: linear-gradient(#b4b4b4, #b4b4b4) center bottom / 28px 2px no-repeat border-box; }
.app.two { background: linear-gradient(90deg, #b4b4b4 19px, #858585 19px) center bottom / 28px 2px no-repeat border-box; }
.app.alert {
  background:
    linear-gradient(#ffee00, #ffee00) center bottom / 28px 2px no-repeat border-box,
    linear-gradient(90deg, #857d35 20px, #575757 20px) center / 28px 100% no-repeat border-box;
}
.app.current { background: #6d6d6d; border-bottom-color: #b4b4b4; }
.right .current { background: #4e4e4e; }
.tray {
  display: flex;
  align-items: center;
  gap: 8px;
  margin-left: auto;
  margin-right: 4px;
  padding-right: 19px;
  border-right: 1px solid #888;
}
.tray svg { width: 16px; height: 16px; }
.tray .weather { width: 24px; height: 20px; margin-right: 3px; }
.tray time { margin: 0 14px 0 4px; }

.above-right { position: absolute; top: 0; left: 50%; right: 0; height: 72px; background: #000; }
.screen-left { position: absolute; left: 0; bottom: 0; width: 50%; height: 102px; background: #000; }
</style>
